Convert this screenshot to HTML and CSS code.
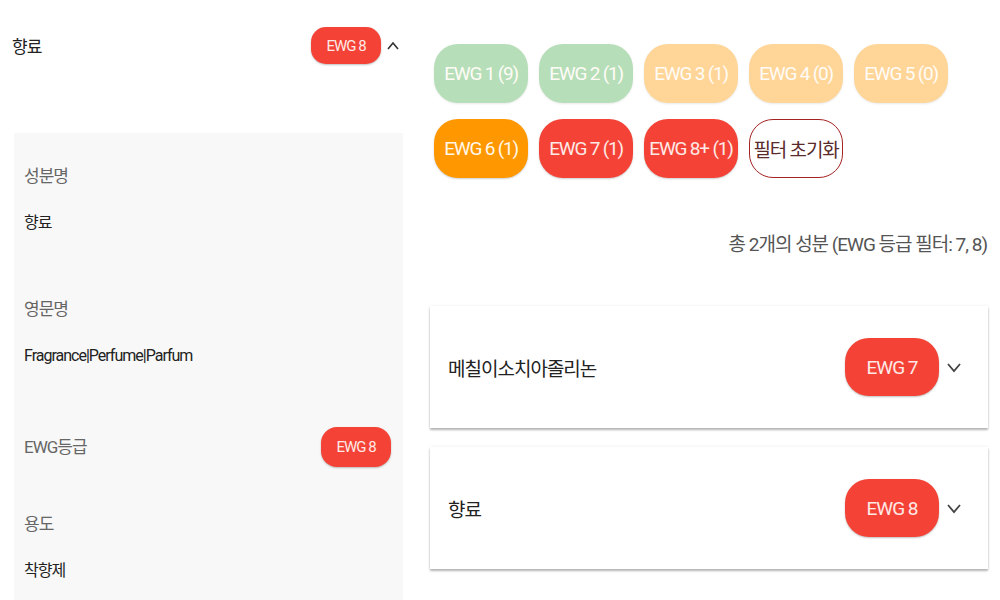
FILE: index.html
```html
<!DOCTYPE html>
<html lang="ko">
  <head>
    <meta charset="UTF-8" />
    <meta name="viewport" content="width=device-width, initial-scale=1.0" />
    <title>성분 목록</title>
    <link rel="stylesheet" href="styles.css">
  </head>
  <body>
    <div class="page">
      <!-- left: opened ingredient -->
      <div class="detail">
        <div class="detail-head">
          <span class="name">향료</span>
          <span class="grade grade-sm">EWG 8</span>
          <svg class="caret" width="14" height="10" viewBox="0 0 14 10">
            <polyline points="2,8 7,2 12,8" fill="none" stroke="#333" stroke-width="1.6" />
          </svg>
        </div>

        <div class="detail-body">
          <div class="field">
            <div class="label">성분명</div>
            <div class="value">향료</div>
          </div>
          <div class="field">
            <div class="label">영문명</div>
            <div class="value">Fragrance|Perfume|Parfum</div>
          </div>
          <div class="field field-row">
            <div class="label">EWG등급</div>
            <span class="grade grade-md">EWG 8</span>
          </div>
          <div class="field">
            <div class="label">용도</div>
            <div class="value">착향제</div>
          </div>
        </div>
      </div>

      <!-- right: filter + list -->
      <div class="list">
        <div class="filters">
          <button class="chip green off">EWG 1 (9)</button>
          <button class="chip green off">EWG 2 (1)</button>
          <button class="chip yellow off">EWG 3 (1)</button>
          <button class="chip yellow off">EWG 4 (0)</button>
          <button class="chip yellow off">EWG 5 (0)</button>
          <button class="chip orange">EWG 6 (1)</button>
          <button class="chip red">EWG 7 (1)</button>
          <button class="chip red">EWG 8+ (1)</button>
          <button class="chip reset">필터 초기화</button>
        </div>

        <p class="summary">총 2개의 성분 (EWG 등급 필터: 7, 8)</p>

        <div class="card">
          <span class="card-name">메칠이소치아졸리논</span>
          <span class="grade grade-lg">EWG 7</span>
          <svg class="chevron" width="16" height="12" viewBox="0 0 16 12">
            <polyline points="2,3 8,10 14,3" fill="none" stroke="#444" stroke-width="1.8" />
          </svg>
        </div>
        <div class="card">
          <span class="card-name">향료</span>
          <span class="grade grade-lg">EWG 8</span>
          <svg class="chevron" width="16" height="12" viewBox="0 0 16 12">
            <polyline points="2,3 8,10 14,3" fill="none" stroke="#444" stroke-width="1.8" />
          </svg>
        </div>
      </div>
    </div>
  </body>
</html>
```

FILE: styles.css
```css
body {
  margin: 0;
  background: #fff;
  font-family: Roboto, "Noto Sans CJK KR", sans-serif;
  color: #222;
  letter-spacing: -1px;
}
.page {
  display: grid;
  grid-template-columns: 405px 1fr;
  column-gap: 25px;
  padding-right: 12px;
  height: 600px;
  overflow: hidden;
}

/* left column */
.detail-head {
  display: flex;
  align-items: center;
  padding: 27px 5px 0 12px;
  height: 37px;
}
.name {
  flex: 1;
  font-size: 17px;
}
.caret {
  margin-left: 5px;
}
.grade {
  display: inline-flex;
  align-items: center;
  justify-content: center;
  background: #f44336;
  color: #fde9e6;
  box-shadow: 0 1px 2px rgba(0, 0, 0, 0.25);
}
.grade-sm {
  width: 70px;
  height: 37px;
  border-radius: 15px;
  font-size: 15px;
}
.grade-md {
  width: 70px;
  height: 40px;
  border-radius: 16px;
  font-size: 15px;
}
.grade-lg {
  width: 94px;
  height: 58px;
  border-radius: 24px;
  font-size: 19px;
}
.detail-body {
  margin: 69px 2px 0 14px;
  padding: 31px 12px 22px 10px;
  background: #f8f8f8;
  display: flex;
  flex-direction: column;
  gap: 62px;
}
.label {
  font-size: 17px;
  line-height: 24px;
  color: #666;
}
.value {
  margin-top: 23px;
  font-size: 16px;
  line-height: 24px;
  color: #222;
}
.field-row {
  display: flex;
  align-items: center;
  justify-content: space-between;
  margin: -3px 0 -17px;
}

/* right column */
.list {
  padding-top: 44px;
}
.filters {
  display: flex;
  flex-wrap: wrap;
  gap: 16px 11px;
  padding-left: 4px;
}
.chip {
  width: 94px;
  height: 59px;
  border: none;
  border-radius: 24px;
  font-family: inherit;
  font-size: 19px;
  letter-spacing: -1.2px;
  color: #fff7ea;
  box-shadow: 0 1px 2px rgba(0, 0, 0, 0.2);
  padding: 0;
  cursor: pointer;
}
.green { background: #4caf50; }
.yellow { background: #ff9800; }
.orange { background: #ff9800; }
.red { background: #f44336; color: #fde9e6; }
.off { opacity: 0.4; }
.reset {
  background: #fff;
  border: 1.5px solid #a52222;
  color: #5a2b2b;
  box-shadow: none;
}
.summary {
  margin: 55px 1px 49px 0;
  text-align: right;
  font-size: 19px;
  line-height: 24px;
  color: #555;
}
.card {
  display: flex;
  align-items: center;
  height: 122px;
  padding: 0 26px 0 18px;
  margin-bottom: 19px;
  background: #fff;
  box-shadow: 0 2px 2px rgba(0, 0, 0, 0.28), 0 0 3px rgba(0, 0, 0, 0.08);
}
.card-name {
  flex: 1;
  font-size: 19px;
}
.chevron {
  margin-left: 7px;
}
```
